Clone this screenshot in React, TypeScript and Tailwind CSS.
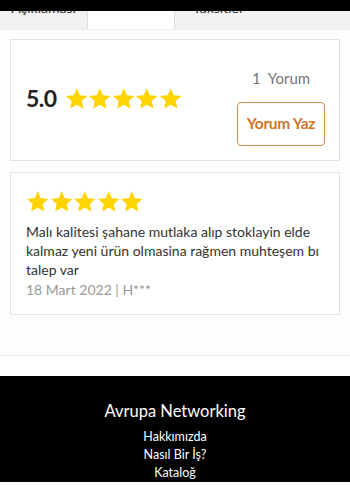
import React from "react";

const Star = ({ size }: { size: number }) => (
  <svg width={size} height={size} viewBox="0 0 24 24" className="shrink-0">
    <polygon
      points="12,1.2 15.2,8.3 23,9.1 17.1,14.3 18.8,22 12,18 5.2,22 6.9,14.3 1,9.1 8.8,8.3"
      fill="#ffd400"
    />
  </svg>
);

const Stars = ({ size }: { size: number }) => (
  <div className="flex items-center gap-0">
    {[0, 1, 2, 3, 4].map((i) => (
      <Star key={i} size={size} />
    ))}
  </div>
);

export default function App() {
  return (
    <div
      className="relative w-[350px] h-[490px] overflow-hidden bg-white"
      style={{ fontFamily: "'Lato', 'Noto Sans', sans-serif" }}
    >
      <div className="absolute left-0 top-0 w-full h-[11px] bg-black z-10" />
      <div className="bg-[#fdfdfd] border-b border-[#ececec]">
        <div className="flex h-[30px] border-b border-[#ececec] bg-white">
          <div className="w-[88px] bg-[#f2f2f2] border-r border-[#dedede] text-[14px] text-[#333] text-center leading-[15px]">
            Açıklaması
          </div>
          <div className="w-[86px] bg-white" />
          <div className="flex-1 bg-[#f2f2f2] border-l border-[#dedede] text-[14px] text-[#333] text-center leading-[15px] pr-[88px]">
            Taksitler
          </div>
        </div>
        <div className="px-[10px] pt-[9px] pb-[40px] flex flex-col gap-[11px]">
          <div className="h-[122px] border border-[#e3e3e3] bg-white flex justify-between pl-[15px] pr-[14px]">
            <div className="self-center flex items-center gap-[8px] mb-[3px]">
              <span className="text-[23px] font-bold text-[#222] tracking-[-0.5px]">5.0</span>
              <Stars size={23.5} />
            </div>
            <div className="flex flex-col items-center pt-[28px] gap-[14px]">
              <span className="text-[15px] leading-[20px] text-[#777]">1&nbsp; Yorum</span>
              <button className="w-[88px] h-[44px] border border-[#d68f4f] rounded-[4px] text-[15.5px] font-bold text-[#d0742a] bg-white tracking-[-0.3px]">
                Yorum Yaz
              </button>
            </div>
          </div>
          <div className="h-[143px] border border-[#e3e3e3] bg-white px-[15px] pt-[17px]">
            <Stars size={23.5} />
            <div className="mt-[8px] text-[14px] leading-[19px] text-[#333]">
              <div>Malı kalitesi şahane mutlaka alıp stoklayin elde</div>
              <div>kalmaz yeni ürün olmasina rağmen muhteşem bı</div>
              <div>talep var</div>
            </div>
            <div className="mt-[1px] text-[14px] leading-[19px] text-[#999]">18 Mart 2022 | H***</div>
          </div>
        </div>
      </div>
      <div className="h-[20px] bg-white" />
      <div className="bg-black text-white flex flex-col items-center pt-[24px]">
        <div className="text-[16.5px] leading-[22px]">Avrupa Networking</div>
        <div className="mt-[6px] flex flex-col items-center text-[12.5px] leading-[18px]">
          <span>Hakkımızda</span>
          <span>Nasıl Bir İş?</span>
          <span>Kataloğ</span>
        </div>
      </div>
    </div>
  );
}
